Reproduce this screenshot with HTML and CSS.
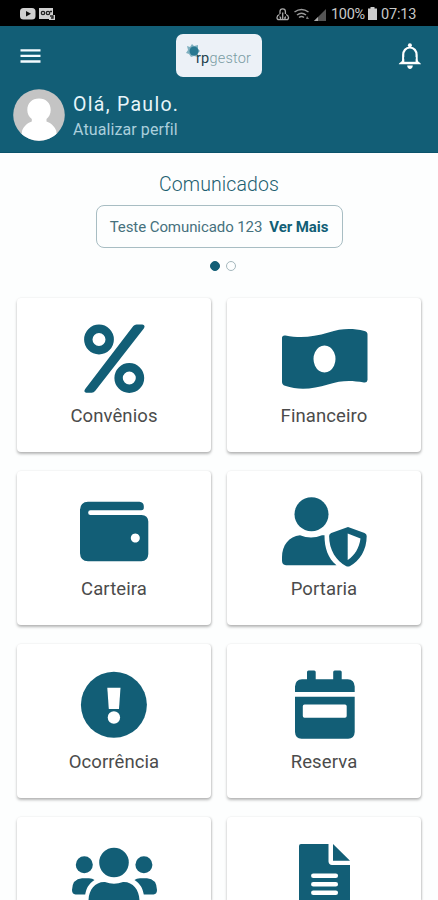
FILE: index.html
```
<!DOCTYPE html>
<html lang="pt-BR">
<head>
<meta charset="utf-8">
<title>RP Gestor</title>
<link rel="stylesheet" href="styles.css">
</head>
<body>
<div class="status">
  <svg class="status-left" viewBox="20 7 36 13" width="36" height="13">
    <rect x="20" y="8" width="15.5" height="11.5" rx="3.5" fill="#d0d0d0"/><path d="M26 11l5 2.700-5 2.700z" fill="#111"/>
    <path d="M39 8h14v7h2v5h-6v-1H39z" fill="#d0d0d0"/><g fill="none" stroke="#222" stroke-width="1.300"><circle cx="43" cy="13" r="1.700"/><circle cx="48" cy="13" r="1.700"/><path d="M50 11.500h2M50 16h3v2h-2"/></g>
  </svg>
  <div class="status-right">
    <svg viewBox="275 6 52 16" width="52" height="16">
      <g fill="none" stroke="#aaa" stroke-width="1.300"><path d="M280 13v-2.500a2.700 2.700 0 0 1 5.400 0V13M282.700 11.500V19M279.500 13.500c-3 1-3.500 5.200-.5 5.200 2 0 2.300-2.700.5-2.700M286 13.500c3 1 3.500 5.200.5 5.200-2 0-2.300-2.700-.5-2.700M279.500 18.700h7"/></g>
      <g fill="none" stroke="#999" stroke-width="1.500"><path d="M294.500 11q7-5 14 0M297 14q4.500-3.500 9 0M299 16.500q2.500-2 5 0"/></g><path d="M307 15l2 3h-3z" fill="#777"/>
      <path d="M326 8v12h-12z" fill="#555"/><path d="M318 16v4h-4z" fill="#aaa"/>
    </svg>
    <span class="battery-text">100%</span>
    <svg viewBox="0 0 9 13" width="9" height="13"><path d="M2.500 0h4v1.500H9V13H0V1.500h2.500z" fill="#ccc"/></svg>
    <span class="clock">07:13</span>
  </div>
</div>
<header class="header">
  <div class="bar">
    <svg class="menu" viewBox="20 48 21 15" width="21" height="15"><path d="M20.500 50.300h20M20.500 55.900h20M20.500 61.500h20" stroke="#f4fbff" stroke-width="2.300"/></svg>
    <div class="logo">
      <svg viewBox="186 43 14 15" width="14" height="15"><path d="M187 46l3 1 2-3 2 2 4-1v4l2 2-2 2v4l-4-1-3 1-2-3-3-1 2-3z" fill="#7fb0c0"/><circle cx="194" cy="51" r="4.500" fill="#287891"/></svg>
      <span class="logo-text"><b>rp</b>gestor</span>
    </div>
    <svg viewBox="398 43 24 28" width="24" height="28"><path d="M401 64h17.500M403.200 63.500V56c0-4 2.500-7.500 6.700-7.500s6.700 3.500 6.700 7.500v7.500" fill="none" stroke="#fff" stroke-width="2.200"/><path d="M398.800 65.200c0-1.500 3.400-2 3.800-5h14.600c.4 3 3.800 3.500 3.800 5z" fill="#fff"/><path d="M404.300 58h11.300v4.800h-11.300z" fill="#125e76"/><path d="M407.200 66.500h5.600c0 4.500-5.600 4.500-5.600 0z" fill="#fff"/><circle cx="409.900" cy="46.300" r="2" fill="#fff"/></svg>
  </div>
  <div class="profile">
    <svg viewBox="0 0 52 52" width="52" height="52"><defs><clipPath id="face"><circle cx="26" cy="26" r="25.800"/></clipPath></defs><g clip-path="url(#face)"><path d="M0 0h52v52H0z" fill="#c4c4c4"/><path d="M26 9.500c7 0 11.700 4.500 11.700 11.500 0 4-1.700 7-4.200 9v2.500c5 1.500 8 5 9.800 9.500L44 52H8l1-10c1.800-4.500 4.800-8 9.800-9.500V30c-2.700-2-4.500-5-4.500-9 0-7 4.700-11.500 11.700-11.500z" fill="#fff"/></g></svg>
    <div class="who"><div class="hello">Olá, Paulo.</div><div class="edit">Atualizar perfil</div></div>
  </div>
</header>
<main>
  <section class="news">
    <h1>Comunicados</h1>
    <div class="notice"><span>Teste Comunicado 123</span><b>Ver Mais</b></div>
    <div class="dots"><i class="dot on"></i><i class="dot"></i></div>
  </section>
  <section class="grid">
    <div class="card">
      <svg class="icon" viewBox="66 320 96 78"><g fill="none" stroke="#125e76" stroke-width="8.400"><circle cx="99" cy="339.500" r="10.700"/><circle cx="129.300" cy="378" r="10.700"/></g><path d="M133.300 326q1.400-1.500 3.200-1.500h5.800q3.600.8 1.500 4L95.300 390.700q-1.600 2.100-3.600 2.100h-5.500q-3-.8-1-3.800z"/></svg>
      <div class="label">Convênios</div>
    </div>
    <div class="card">
      <svg class="icon" viewBox="276 320 96 78"><path fill-rule="evenodd" d="M282 338q0-3 3.500-2.500c15 3 28 1.500 43-3 13-4 23-4.500 36-1.500q3 .8 3 3.500v45.500q-.5 3-3.500 2.500c-14-2.500-23-2-36 2-15 4.500-29 6-43 1.300q-3-1-3-3.800zM324.500 345.500a11 13.500 0 1 0 .01 0z"/></svg>
      <div class="label">Financeiro</div>
    </div>
    <div class="card">
      <svg class="icon" viewBox="66 493 96 78"><path fill-rule="evenodd" d="M88 501.800h51.500q4 .3 4.300 4.200v2q0 2.300-2.500 2.300H90.500a2.300 2.300 0 0 0 0 4.700h51q6.500.3 6.800 6.500V554q-.3 7-7 7.300H88q-7.700-.3-8-8v-43.500q.3-7.700 8-8zM135.300 533.500a4.500 4.500 0 1 0 .01 0z"/></svg>
      <div class="label">Carteira</div>
    </div>
    <div class="card">
      <svg class="icon" viewBox="276 493 96 78"><circle cx="311.500" cy="514.300" r="17"/><path d="M300 535.300q11 4.400 22 0h2.500c0 13 3.500 23 12 30H286q-4-.5-4-4.500v-3.500c0-12 7-21 18-22z"/><path fill-rule="evenodd" d="M348 527l16.500 6q2.200.8 2.200 3c0 14-7 25-17 30.200q-1.700.8-3.400 0c-10-5.200-17.200-16.200-17.200-30.200q0-2.200 2.200-3zM347.700 533.500v26.500c7-4.500 11.500-12 12.800-21.500z"/></svg>
      <div class="label">Portaria</div>
    </div>
    <div class="card">
      <svg class="icon" viewBox="66 666 96 78"><circle cx="113.900" cy="704.800" r="33"/><path d="M107.300 687.700h13.200l-1.500 21.300h-10.200z" fill="#fff"/><circle cx="113.900" cy="717.500" r="6.200" fill="#fff"/></svg>
      <div class="label">Ocorrência</div>
    </div>
    <div class="card">
      <svg class="icon" viewBox="276 666 96 78"><path d="M295 692v-5.500q.3-7 7-7.300h5V672q0-1.500 1.500-1.500h5.700q1.500 0 1.500 1.500v7.200h17.500V672q0-1.500 1.500-1.500h5.500q1.500 0 1.500 1.500v7.200h6q6.700.3 7 7.300v5.500z"/><path fill-rule="evenodd" d="M295 696.800h59.700V732q-.3 6.500-6.500 6.800H301.500q-6.200-.3-6.500-6.800zM304.500 704.500q-1.700 0-1.700 1.700v9.800q0 1.700 1.700 1.700h40.500q1.700 0 1.700-1.700v-9.800q0-1.700-1.700-1.700z"/></svg>
      <div class="label">Reserva</div>
    </div>
    <div class="card cut">
      <svg class="icon" viewBox="66 839 96 61"><circle cx="114" cy="862.500" r="14.800"/><circle cx="84.300" cy="864.800" r="8.500"/><circle cx="143.900" cy="864.800" r="8.500"/><path d="M72 890q.3-11 10-11.700h7q3.500.2 5.500 1.700c-6 4-8 8-9.300 14.500H75.500q-3.500-.5-3.500-4.500zM157 890q-.3-11-10-11.700h-7q-3.500.2-5.500 1.700c6 4 8 8 9.300 14.500h9.700q3.500-.5 3.500-4.500z"/><path d="M105 882q9 3.500 18 0c10-.5 16.500 8 16.500 19v10h-51v-10c0-11 6.500-19.500 16.500-19z"/></svg>
    </div>
    <div class="card cut">
      <svg class="icon" viewBox="276 839 96 61"><path d="M301 844h27.500v17.500q.3 3.300 3.500 3.500h18v48h-51v-67q0-2 2-2zM333 844l17 16.700H333z"/><path d="M313.300 875.700h22.500M313.300 884.300h22.500M313.300 892.700h22.500" stroke="#fff" stroke-width="4.500" stroke-linecap="round"/></svg>
    </div>
  </section>
</main>
</body>
</html>
```
FILE: styles.css
```
* { box-sizing: border-box; }
html, body { margin: 0; height: 900px; overflow: hidden; }
body { width: 438px; background: #fdfefe; font-family: Roboto, sans-serif; }
svg { display: block; flex: none; }
.status { height: 26px; background: #000; display: flex; justify-content: space-between; padding: 7px 22px 0 20px; }
.status-right { display: flex; color: #c8c8c8; font-size: 14.500px; line-height: 15px; }
.battery-text { width: 34px; margin: 0 3px 0 4px; white-space: nowrap; letter-spacing: -.3px; }
.clock { width: 35px; margin-left: 4px; letter-spacing: -.2px; }
.header { height: 127px; background: #125e76; border-bottom: 1px solid #0b536b; }
.bar { height: 60px; padding: 0 16px 0 20px; display: flex; align-items: center; justify-content: space-between; }
.menu { margin-bottom: 1px; }
.logo { width: 86px; height: 43px; margin: 0 1px 1px 0; border-radius: 7px; background: #ecf1f7; display: flex; padding: 9px 0 0 10px; }
.logo-text { font: 300 14.500px/20px Roboto, sans-serif; color: #7a9ca3; margin: 6px 0 0 -4px; letter-spacing: .2px; }
.logo-text b { font-weight: 400; color: #24434d; }
.profile { display: flex; padding: 3px 0 0 13px; }
.who { padding: 5px 0 0 8px; color: #e7f5fa; }
.hello { font-size: 19.500px; line-height: 22px; letter-spacing: 1.300px; }
.edit { font-size: 16px; line-height: 20px; margin-top: 4px; letter-spacing: .1px; color: #aacfdc; }
.news { height: 145px; padding-top: 20px; display: flex; flex-direction: column; align-items: center; }
h1 { margin: 0; font-size: 19.500px; line-height: 24px; font-weight: 300; color: #1c5f70; letter-spacing: .1px; }
.notice { width: 247px; height: 43px; margin-top: 8px; border: 1px solid #a8bdc3; border-radius: 8px; display: flex; align-items: center; justify-content: center; gap: 7px; font-size: 15px; letter-spacing: -.08px; color: #46717d; white-space: nowrap; }
.notice b { color: #125e76; font-weight: 700; }
.dots { display: flex; gap: 6px; margin: 13px 0 0 7px; }
.dot { width: 10px; height: 10px; border: 1px solid #a5b8bd; border-radius: 50%; }
.dot.on { background: #125e76; border-color: #125e76; }
.grid { display: grid; grid-template-columns: 194px 194px; grid-template-rows: repeat(3, 154px) 83px; gap: 19px 16px; padding-left: 17px; }
.card { background: #fff; border-radius: 4px; padding-top: 22px; display: flex; flex-direction: column; align-items: center; box-shadow: 0 2px 3px rgba(0,0,0,.28), 1px 0 2px rgba(0,0,0,.1); }
.cut { border-radius: 4px 4px 0 0; }
.icon { width: 96px; height: 78px; fill: #125e76; }
.cut .icon { height: 61px; }
.label { margin-top: 6px; font-size: 18.500px; line-height: 24px; letter-spacing: .1px; color: #4b4b4b; }
```
